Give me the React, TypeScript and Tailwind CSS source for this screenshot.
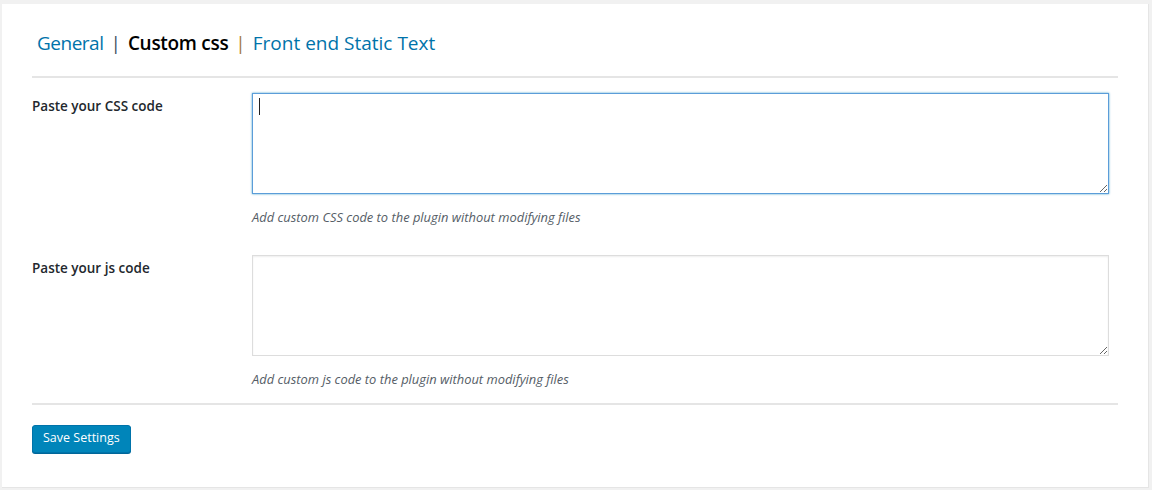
import React from "react";

export default function App() {
  const font = { fontFamily: '"Open Sans", "Noto Sans", sans-serif' };

  return (
    <div className="min-h-[490px] bg-[#f1f1f1] pl-[2px] pr-[3px] pt-[4px] pb-[3px]" style={font}>
      <div className="bg-white border-r border-b border-[#e5e5e5] px-[30px] pt-[25px] pb-[34px]">
        {/* Tabs */}
        <div className="flex items-center pl-[5px] text-[19px] leading-[28px] text-[#0073aa]">
          <a className="cursor-pointer tracking-[-0.5px]">General</a>
          <span className="mx-[7px] text-[#3d4f63]">|</span>
          <span className="font-semibold text-black tracking-[-0.3px]">Custom css</span>
          <span className="mx-[7px] text-[#a57a45]">|</span>
          <a className="cursor-pointer">Front end Static Text</a>
        </div>

        <div className="mt-[19px] h-[2px] bg-[#e5e5e5]" />

        {/* CSS row */}
        <div className="flex mt-[15px]">
          <label className="w-[220px] shrink-0 pt-[3px] text-[13.5px] font-semibold text-[#23282d]">
            Paste your CSS code
          </label>
          <div className="flex-1 pr-[9px]">
            <div className="relative">
              <textarea
                autoFocus
                className="block w-full h-[101px] resize-y border border-[#5b9dd9] shadow-[0_0_2px_rgba(30,140,190,0.8)] outline-none px-[7px] py-[2px] text-[14px]"
              />
              <span className="absolute left-[7px] top-[5px] w-px h-[17px] bg-[#222]" />
            </div>
            <p className="mt-[14px] text-[12.9px] italic text-[#555d66]">
              Add custom CSS code to the plugin without modifying files
            </p>
          </div>
        </div>

        {/* JS row */}
        <div className="flex mt-[28px]">
          <label className="w-[220px] shrink-0 pt-[3px] text-[13.5px] font-semibold text-[#23282d]">
            Paste your js code
          </label>
          <div className="flex-1 pr-[9px]">
            <textarea className="block w-full h-[101px] resize-y border border-[#dddddd] shadow-[inset_0_1px_2px_rgba(0,0,0,0.07)] outline-none px-[7px] py-[2px] text-[14px]" />
            <p className="mt-[14px] text-[12.9px] italic text-[#555d66]">
              Add custom js code to the plugin without modifying files
            </p>
          </div>
        </div>

        <div className="mt-[13px] h-[2px] bg-[#e5e5e5]" />

        <button className="mt-[20px] h-[28px] px-[10px] rounded-[3px] bg-[#0085ba] border border-[#0073aa] shadow-[0_1px_0_#006799] text-white text-[12.5px]">
          Save Settings
        </button>
      </div>
    </div>
  );
}
